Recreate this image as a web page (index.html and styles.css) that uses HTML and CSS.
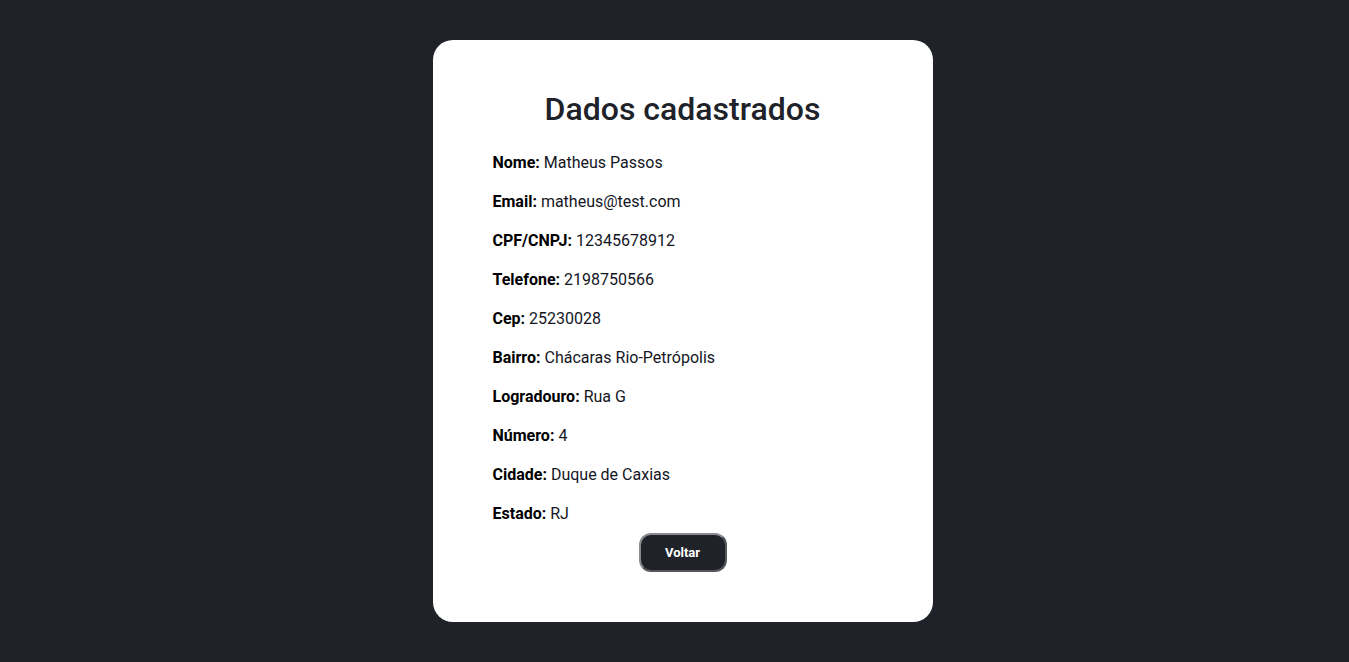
FILE: index.html
```html
<!DOCTYPE html>
<html lang="pt-BR">
<head>
<meta charset="utf-8">
<title>Dados cadastrados</title>
<link rel="stylesheet" href="styles.css">
</head>
<body>
<main class="card">
  <h1 class="title">Dados cadastrados</h1>
  <div class="fields">
    <p class="field"><strong>Nome:</strong> Matheus Passos</p>
    <p class="field"><strong>Email:</strong> matheus@test.com</p>
    <p class="field"><strong>CPF/CNPJ:</strong> 12345678912</p>
    <p class="field"><strong>Telefone:</strong> 2198750566</p>
    <p class="field"><strong>Cep:</strong> 25230028</p>
    <p class="field"><strong>Bairro:</strong> Chácaras Rio-Petrópolis</p>
    <p class="field"><strong>Logradouro:</strong> Rua G</p>
    <p class="field"><strong>Número:</strong> 4</p>
    <p class="field"><strong>Cidade:</strong> Duque de Caxias</p>
    <p class="field"><strong>Estado:</strong> RJ</p>
  </div>
  <div class="actions">
    <button class="btn" type="button">Voltar</button>
  </div>
</main>
</body>
</html>
```
FILE: styles.css
```css
html, body {
  margin: 0;
  padding: 0;
}
body {
  background: #202229;
  font-family: Roboto, "Liberation Sans", Arial, sans-serif;
  display: flex;
  justify-content: center;
  padding-top: 40px;
  padding-left: 16px;
  min-height: 662px;
  box-sizing: border-box;
}
.card {
  width: 500px;
  box-sizing: border-box;
  background: #ffffff;
  border-radius: 20px;
  padding: 50px 60px 50px;
  align-self: flex-start;
}
.title {
  margin: 0;
  font-size: 32px;
  line-height: 38px;
  font-weight: 500;
  color: #202229;
  text-align: center;
}
.fields {
  display: flex;
  flex-direction: column;
  gap: 16px;
  margin-top: 22.5px;
}
.field {
  margin: 0;
  font-size: 16px;
  line-height: 23px;
  color: #14161f;
}
.field strong {
  color: #000;
  font-weight: 700;
}
.actions {
  display: flex;
  justify-content: center;
  margin-top: 8.5px;
}
.btn {
  width: 88px;
  height: 39px;
  background: #1f2229;
  color: #ffffff;
  border: 2px solid #8a8b8f;
  border-right-color: #55575c;
  border-bottom-color: #55575c;
  border-radius: 12px;
  font-family: Roboto, "Liberation Sans", Arial, sans-serif;
  font-weight: 700;
  font-size: 13px;
  cursor: pointer;
}
```
